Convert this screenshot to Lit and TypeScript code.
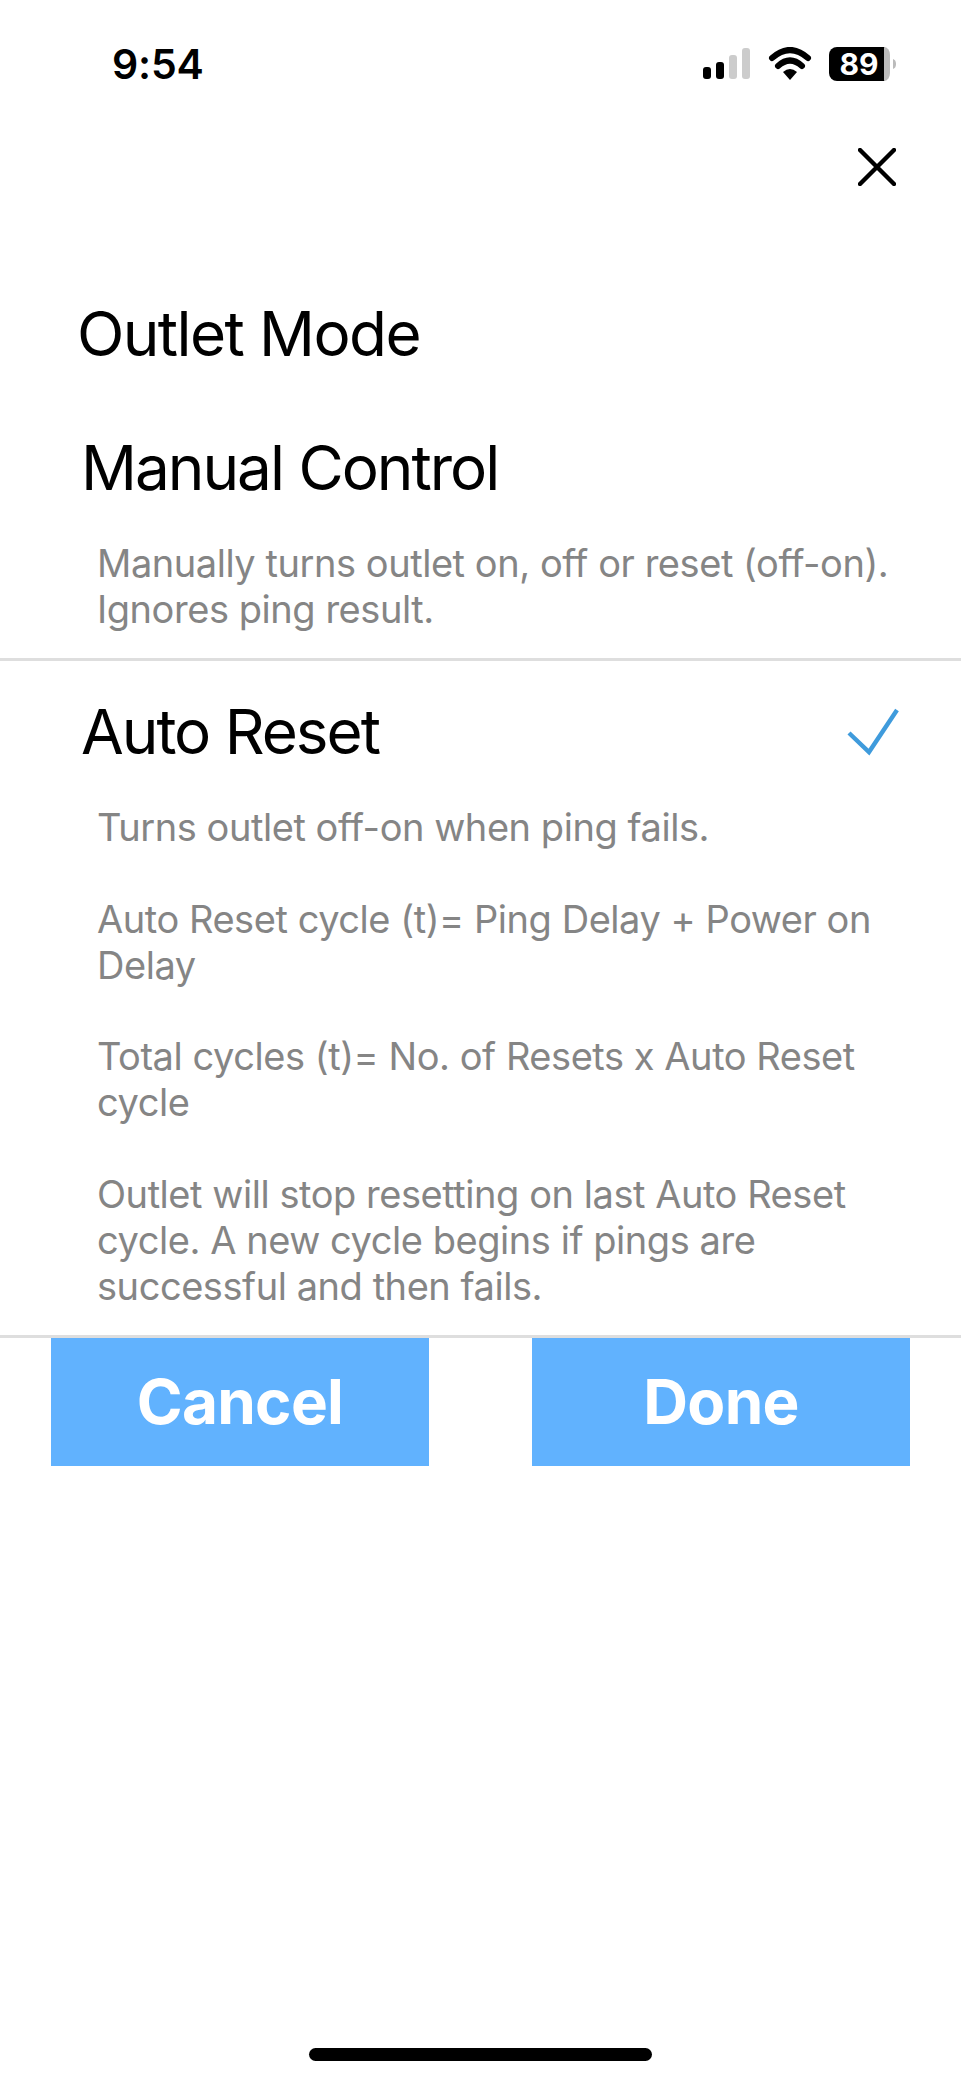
import { LitElement, html, css } from 'lit';
import { customElement } from 'lit/decorators.js';

@customElement('app-root')
export class AppRoot extends LitElement {
  static styles = css`
    :host {
      display: block;
      width: 961px;
      height: 2080px;
      background: #fff;
      font-family: Inter, 'Liberation Sans', sans-serif;
      color: #000;
      overflow: hidden;
      position: relative;
    }
    .status {
      display: flex;
      justify-content: space-between;
      align-items: center;
      height: 44px;
      padding: 42px 65px 0 112px;
    }
    .time {
      font-size: 41px;
      font-weight: 600;
      line-height: 44px;
      letter-spacing: -0.2px;
    }
    .icons {
      display: flex;
      align-items: center;
    }
    .icons svg {
      display: block;
    }
    .close-row {
      display: flex;
      justify-content: flex-end;
      padding: 62px 65px 0 0;
    }
    .close-row svg {
      display: block;
    }
    .page-title {
      font-size: 62px;
      line-height: 70px;
      margin: 113px 0 0 77px;
      letter-spacing: -1.6px;
    }
    .mode-head {
      display: flex;
      justify-content: space-between;
      align-items: center;
      padding: 0 62px 0 81px;
      height: 70px;
    }
    .mode-name {
      font-size: 62px;
      line-height: 70px;
      letter-spacing: -2px;
    }
    .manual {
      margin-top: 64px;
    }
    .desc {
      margin: 0 40px 0 97px;
      color: #858585;
      font-size: 38px;
      line-height: 45.9px;
      letter-spacing: -0.45px;
    }
    .desc p {
      margin: 0 0 45.9px;
    }
    .desc p:last-child {
      margin: 0;
    }
    .manual .desc {
      margin-top: 38px;
    }
    .rule {
      height: 3px;
      background: #dedede;
      margin-top: 25px;
    }
    .auto {
      padding-top: 36px;
    }
    .auto .desc {
      margin-top: 38px;
    }
    .actions {
      display: flex;
      justify-content: space-between;
      padding: 0 51px;
    }
    .btn {
      width: 378px;
      height: 128px;
      background: #61b2fe;
      color: #fff;
      font-size: 62px;
      font-weight: 700;
      display: flex;
      align-items: center;
      justify-content: center;
      letter-spacing: -0.7px;
    }
    .home {
      position: absolute;
      left: 309px;
      top: 2048px;
      width: 343px;
      height: 13px;
      border-radius: 7px;
      background: #000;
    }
  `;

  render() {
    return html`
      <div class="status">
        <span class="time">9:54</span>
        <div class="icons">
          <svg width="193" height="34" viewBox="0 0 193 34">
            <rect x="0" y="20" width="8" height="12" rx="3" fill="#000" />
            <rect x="13" y="15" width="8" height="17" rx="3" fill="#000" />
            <rect x="26" y="8" width="8" height="24" rx="3" fill="#ccc" />
            <rect x="39" y="1" width="8" height="31" rx="3" fill="#ccc" />
            <path d="M69 11 Q87 -5 105 11" fill="none" stroke="#000" stroke-width="6" stroke-linecap="round" />
            <path d="M75 19 Q87 8 99 19" fill="none" stroke="#000" stroke-width="6" stroke-linecap="round" />
            <path d="M80 25 Q87 19 94 25 L87 33 Z" fill="#000" />
            <path d="M126 8 a8 8 0 0 1 8 -8 H182 V34 H134 a8 8 0 0 1 -8 -8 Z" fill="#000" />
            <path d="M181 0 a6 8 0 0 1 6 8 V26 a6 8 0 0 1 -6 8 Z" fill="#bbb" />
            <path d="M190 12 a4 5 0 0 1 3 5 a4 5 0 0 1 -3 5 Z" fill="#bbb" />
            <text x="156" y="28" text-anchor="middle" fill="#fff" font-family="Inter" font-size="30" font-weight="700">89</text>
          </svg>
        </div>
      </div>
      <div class="close-row">
        <svg width="38" height="38" viewBox="0 0 38 38">
          <path d="M2 2 L36 36 M36 2 L2 36" stroke="#000" stroke-width="4.4" stroke-linecap="round" />
        </svg>
      </div>
      <div class="page-title">Outlet Mode</div>
      <section class="manual">
        <div class="mode-head"><span class="mode-name">Manual Control</span></div>
        <div class="desc">
          <p>Manually turns outlet on, off or reset (off-on).<br />Ignores ping result.</p>
        </div>
      </section>
      <div class="rule"></div>
      <section class="auto">
        <div class="mode-head">
          <span class="mode-name">Auto Reset</span>
          <svg width="52" height="48" viewBox="0 0 52 48">
            <path d="M2 25 L22 44 L50 2" fill="none" stroke="#3f9bdc" stroke-width="4.4" />
          </svg>
        </div>
        <div class="desc">
          <p>Turns outlet off-on when ping fails.</p>
          <p>Auto Reset cycle (t)= Ping Delay + Power on<br />Delay</p>
          <p>Total cycles (t)= No. of Resets x Auto Reset<br />cycle</p>
          <p>Outlet will stop resetting on last Auto Reset<br />cycle. A new cycle begins if pings are<br />successful and then fails.</p>
        </div>
      </section>
      <div class="rule"></div>
      <div class="actions">
        <div class="btn">Cancel</div>
        <div class="btn">Done</div>
      </div>
      <div class="home"></div>
    `;
  }
}
